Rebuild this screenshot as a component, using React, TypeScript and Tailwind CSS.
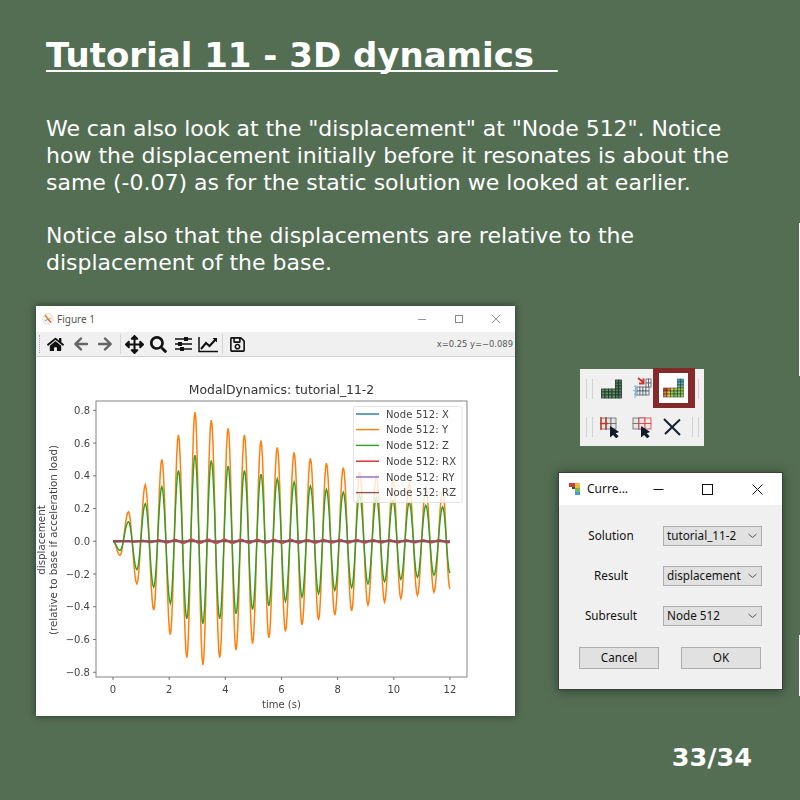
import React from "react";
import { FaHome, FaArrowLeft, FaArrowRight, FaArrowsAlt, FaSearch, FaRegSave } from "react-icons/fa";

const ext: [number, number][] = [
  [0, 0], [0.25, -0.085], [0.55, 0.18], [0.85, -0.26], [1.15, 0.345], [1.45, -0.42], [1.74, 0.5], [2.04, -0.57],
  [2.33, 0.65], [2.63, -0.71], [2.92, 0.79], [3.2, -0.755], [3.5, 0.74], [3.8, -0.71], [4.1, 0.69], [4.38, -0.665],
  [4.68, 0.65], [4.97, -0.625], [5.27, 0.615], [5.55, -0.59], [5.85, 0.573], [6.14, -0.55], [6.45, 0.543], [6.73, -0.51],
  [7.03, 0.507], [7.32, -0.48], [7.6, 0.477], [7.9, -0.45], [8.2, 0.45], [8.5, -0.425], [8.78, 0.424], [9.08, -0.39],
  [9.38, 0.4], [9.67, -0.37], [9.97, 0.375], [10.25, -0.35], [10.55, 0.355], [10.84, -0.33], [11.14, 0.33], [11.43, -0.31],
  [11.74, 0.315], [12, -0.29],
];
const X = (t: number) => 113 + 28.08 * t;
const Y = (v: number) => 541.3 - 163.7 * v;
function curve(scale: number) {
  const pts: string[] = [];
  for (let i = 0; i < ext.length - 1; i++) {
    const [t0, v0] = ext[i];
    const [t1, v1] = ext[i + 1];
    for (let k = 0; k < 10; k++) {
      const f = k / 10;
      const v = v0 + ((v1 - v0) * (1 - Math.cos(Math.PI * f))) / 2;
      pts.push(`${X(t0 + (t1 - t0) * f).toFixed(2)},${Y(v * scale).toFixed(2)}`);
    }
  }
  pts.push(`${X(12)},${Y(-0.29 * scale)}`);
  return pts.join(" ");
}
function small(a: number) {
  const pts: string[] = [];
  for (let t = 0; t <= 12; t += 0.04) {
    const env = Math.min(t / 2.5, 1) * (1 - (t / 12) * 0.4);
    pts.push(`${X(t).toFixed(2)},${Y(-a * env * Math.sin((2 * Math.PI * t) / 0.588)).toFixed(2)}`);
  }
  return pts.join(" ");
}

const dv = { fontFamily: '"DejaVu Sans", sans-serif' };

function Plot() {
  const ticksY = [0.8, 0.6, 0.4, 0.2, 0, -0.2, -0.4, -0.6, -0.8];
  const legend: [string, string, number][] = [
    ["Node 512: X", "#1f77b4", 414],
    ["Node 512: Y", "#ff7f0e", 429.6],
    ["Node 512: Z", "#2ca02c", 445.4],
    ["Node 512: RX", "#d62728", 461.2],
    ["Node 512: RY", "#9467bd", 477],
    ["Node 512: RZ", "#8c564b", 492.6],
  ];
  return (
    <svg viewBox="36 357 479 359" width={479} height={359} className="block blur-[0.3px]" style={dv}>
      <rect x="36" y="357" width="479" height="359" fill="#fff" />
      <text x="281.5" y="394" textAnchor="middle" fontSize="12.4" fill="#333">ModalDynamics: tutorial_11-2</text>
      <polyline points={curve(1)} fill="none" stroke="#ff7f0e" strokeWidth="1.5" />
      <polyline points={curve(0.667)} fill="none" stroke="#2ca02c" strokeWidth="1.4" />
      <polyline points={small(0.015)} fill="none" stroke="#e0484a" strokeWidth="1.5" />
      <line x1={X(0)} x2={X(12)} y1={Y(0)} y2={Y(0)} stroke="#9467bd" strokeWidth="1.5" />
      <polyline points={small(0.002)} fill="none" stroke="#8c5058" strokeWidth="2.4" />
      <rect x="96" y="401" width="371" height="276" fill="none" stroke="#777" strokeWidth="0.9" />
      {ticksY.map((v) => (
        <g key={v}>
          <line x1="93" x2="96" y1={Y(v)} y2={Y(v)} stroke="#555" strokeWidth="0.8" />
          <text x="90" y={Y(v) + 3.6} textAnchor="end" fontSize="10" fill="#444">
            {v < 0 ? "−" + Math.abs(v).toFixed(1) : v.toFixed(1)}
          </text>
        </g>
      ))}
      {[0, 2, 4, 6, 8, 10, 12].map((t) => (
        <g key={t}>
          <line x1={X(t)} x2={X(t)} y1="677" y2="680" stroke="#555" strokeWidth="0.8" />
          <text x={X(t)} y="693" textAnchor="middle" fontSize="10" fill="#444">{t}</text>
        </g>
      ))}
      <text x="281.5" y="708" textAnchor="middle" fontSize="10" fill="#444">time (s)</text>
      <text transform="translate(45 540) rotate(-90)" textAnchor="middle" fontSize="10.3" fill="#444">displacement</text>
      <text transform="translate(57 540) rotate(-90)" textAnchor="middle" fontSize="10.3" fill="#444">(relative to base if acceleration load)</text>
      <rect x="353.5" y="406.5" width="108.5" height="96" rx="1.5" fill="#fff" fillOpacity="0.8" stroke="#ddd" strokeWidth="0.8" />
      {legend.map(([label, c, y]) => (
        <g key={label}>
          <line x1="356" x2="379" y1={y} y2={y} stroke={c} strokeWidth="1.4" />
          <text x="386" y={y + 3.6} fontSize="10" fill="#444" letterSpacing="0.12">{label}</text>
        </g>
      ))}
    </svg>
  );
}

function FigureWindow() {
  return (
    <div className="w-[479px] bg-white shadow-[0_0_7px_rgba(20,35,20,0.75)]">
      <div className="h-[26px] flex items-center">
        <svg width="12" height="12" viewBox="0 0 12 12" className="ml-[6px]">
          <circle cx="6" cy="6" r="5.5" fill="#f2f2f2" stroke="#d8d8d8" strokeWidth="0.6" />
          <path d="M6 6L3 2" stroke="#e8832a" strokeWidth="1.4" />
          <path d="M6 6L9.5 5" stroke="#e0c04a" strokeWidth="1.2" />
          <path d="M6 6L9 9.5" stroke="#d86a3a" strokeWidth="1.4" />
          <path d="M6 6L3 8" stroke="#6a9cc7" strokeWidth="1" />
        </svg>
        <span className="ml-[3px] text-[10px] text-[#555]" style={{ fontFamily: '"Noto Sans", sans-serif' }}>Figure 1</span>
        <div className="ml-auto flex items-center gap-[29px] mr-[15px]">
          <svg width="8" height="8" viewBox="0 0 8 8"><path d="M0 4.5H8" stroke="#999" strokeWidth="1" /></svg>
          <svg width="8" height="8" viewBox="0 0 8 8"><rect x="0.5" y="0.5" width="7" height="7" fill="none" stroke="#888" /></svg>
          <svg width="8" height="8" viewBox="0 0 8 8"><path d="M0 0L8 8M8 0L0 8" stroke="#888" strokeWidth="0.9" /></svg>
        </div>
      </div>
      <div className="h-[25px] bg-[#f0f0f0] border-b border-[#cfcfcf] flex items-center text-[#111]">
        <div className="ml-[3px] h-[18px] w-px border-l border-dotted border-[#aaa]" />
        <FaHome className="ml-[7px] shrink-0" size={17} />
        <FaArrowLeft className="ml-[9px] shrink-0 text-[#666]" size={16} />
        <FaArrowRight className="ml-[8px] shrink-0 text-[#666]" size={16} />
        <div className="ml-[7px] h-[20px] w-px bg-[#d5d5d5]" />
        <FaArrowsAlt className="ml-[4px] shrink-0" size={19} />
        <FaSearch className="ml-[6px] shrink-0" size={17} />
        <svg width="17" height="16" viewBox="0 0 17 16" className="ml-[8px] shrink-0">
          <path d="M0 3H17M0 8H17M0 13H17" stroke="#111" strokeWidth="1.4" />
          <rect x="9" y="1" width="4" height="4" fill="#111" />
          <rect x="3" y="6" width="4" height="4" fill="#111" />
          <rect x="5" y="11" width="4" height="4" fill="#111" />
        </svg>
        <svg width="20" height="17" viewBox="0 0 20 17" className="ml-[6px] shrink-0">
          <path d="M1 1V15.5H20" fill="none" stroke="#111" strokeWidth="1.5" />
          <path d="M3 13L8 7L11.5 10L18 3" fill="none" stroke="#111" strokeWidth="2" />
          <path d="M14.5 2H19V6.5Z" fill="#111" />
        </svg>
        <div className="ml-[4px] h-[20px] w-px bg-[#d5d5d5]" />
        <FaRegSave className="ml-[6px] shrink-0" size={17} />
        <span className="ml-auto mr-[2px] text-[8.4px] text-[#555]" style={dv}>x=0.25 y=−0.089</span>
      </div>
      <Plot />
    </div>
  );
}

function Mesh({ x, y, cols, rows, w, h, fill, stroke = "#26332f", sw = 0.8 }: { x: number; y: number; cols: number; rows: number; w: number; h: number; fill: (c: number, r: number) => string; stroke?: string; sw?: number }) {
  const cells = [];
  for (let r = 0; r < rows; r++)
    for (let c = 0; c < cols; c++)
      cells.push(<rect key={`${r}-${c}`} x={x + c * w} y={y + r * h} width={w} height={h} fill={fill(c, r)} stroke={stroke} strokeWidth={sw} />);
  return <g>{cells}</g>;
}

function LShape({ colour }: { colour: boolean }) {
  const bottom = colour
    ? (c: number, r: number) => [["#d8302c", "#e8792a", "#ecc93a", "#a8cf45"], ["#e8792a", "#ecc93a", "#a8cf45", "#6cc070"], ["#e8792a", "#ecc93a", "#a8cf45", "#6cc070"]][r][c]
    : () => "#5f9a64";
  const right = colour
    ? (_c: number, r: number) => ["#3c9fd0", "#4ab0c0", "#6dbb70", "#93c850"][r]
    : () => "#4f8258";
  return (
    <svg width="21" height="20" viewBox="0 0 21 20" className="shrink-0 blur-[0.25px]">
      <Mesh x={0.5} y={10} cols={4} rows={3} w={3.5} h={3} fill={bottom} sw={colour ? 0.5 : 0.8} />
      <Mesh x={14.5} y={1} cols={2} rows={6} w={3} h={3} fill={(c, r) => right(c, Math.min(3, r))} sw={colour ? 0.5 : 0.8} />
    </svg>
  );
}

function Cursor({ x, y }: { x: number; y: number }) {
  return <path transform={`translate(${x} ${y}) scale(1.35)`} d="M0 0L0 8.5L2.3 6.6L4.6 9.2L6.4 7.6L4.2 5.4L6.8 4.4Z" fill="#0f1c2c" />;
}

function Sep() {
  return <div className="h-[20px] w-px bg-[#d2d2d2] shrink-0" />;
}

function Strip() {
  return (
    <div className="w-[124px] h-[77px] bg-[#f0f0f0] flex flex-col">
      <div className="h-[39px] flex items-center">
        <div className="ml-[6px]"><Sep /></div>
        <div className="ml-[5px]"><Sep /></div>
        <div className="ml-[8px]"><LShape colour={false} /></div>
        <svg width="19" height="23" viewBox="0 0 19 23" className="ml-[11px] shrink-0 blur-[0.25px]">
          <Mesh x={4} y={10} cols={4} rows={2} w={3} h={4} fill={() => "#f4f4f4"} stroke="#55606a" />
          <Mesh x={13} y={2} cols={2} rows={2} w={2.5} h={4} fill={() => "#f4f4f4"} stroke="#55606a" />
          <path d="M1 9L4 11M0 13L4 15M1 17L4 19M3 8L2 21" stroke="#6fb2dc" strokeWidth="1" fill="none" />
          <path d="M5 1L10 5M10.5 1.5V6.5H6" stroke="#cc3333" strokeWidth="2" fill="none" />
        </svg>
        <div className="ml-px w-[42px] h-[40px] -mt-[1px] bg-white border-[#842a2a] border-t-[5px] border-b-[5px] border-l-[6px] border-r-[7px] flex items-center justify-center shrink-0">
          <LShape colour />
        </div>
        <div className="ml-[3px]"><Sep /></div>
      </div>
      <div className="h-[38px] flex items-center">
        <div className="ml-[6px]"><Sep /></div>
        <div className="ml-[5px]"><Sep /></div>
        <svg width="21" height="21" viewBox="0 0 21 21" className="ml-[7px] shrink-0 blur-[0.25px]">
          <Mesh x={1} y={1} cols={3} rows={2} w={5} h={5.5} fill={() => "#e4e4e4"} stroke="#666" />
          <path d="M1 0V13M6 0V13M0 6.5H8" stroke="#c0392b" strokeWidth="1.4" />
          <Cursor x={10} y={9} />
        </svg>
        <svg width="21" height="21" viewBox="0 0 21 21" className="ml-[11px] shrink-0 blur-[0.25px]">
          <Mesh x={1} y={1} cols={2} rows={2} w={6} h={5.5} fill={() => "#e6e6e6"} stroke="#666" />
          <Mesh x={7} y={1} cols={2} rows={2} w={6} h={5.5} fill={() => "#f6e4e4"} stroke="#d04040" />
          <Cursor x={9} y={9} />
        </svg>
        <svg width="19" height="18" viewBox="0 0 19 18" className="ml-[10px] shrink-0">
          <path d="M1 1L17 17M17 1.5L2 16" stroke="#12212f" strokeWidth="2" fill="none" />
        </svg>
        <div className="ml-[10px]"><Sep /></div>
        <div className="ml-[5px]"><Sep /></div>
      </div>
    </div>
  );
}

function Field({ label, value }: { label: string; value: string }) {
  return (
    <div className="flex items-center h-[20px]">
      <span className="w-[104px] text-center text-[11.7px] text-[#111]">{label}</span>
      <div className="w-[99px] h-[20px] bg-[#e1e1e1] border border-[#adadad] flex items-center justify-between pl-[3px] pr-[4px] text-[11.7px] text-[#111]">
        <span>{value}</span>
        <svg width="9" height="6" viewBox="0 0 9 6"><path d="M0.5 1L4.5 4.5L8.5 1" fill="none" stroke="#555" strokeWidth="1" /></svg>
      </div>
    </div>
  );
}

function Dialog() {
  return (
    <div className="w-[225px] h-[218px] bg-[#f0f0f0] border border-[#3b3f3b] shadow-[0_1px_10px_rgba(20,35,20,0.6)] flex flex-col" style={{ fontFamily: '"Noto Sans", sans-serif' }}>
      <div className="h-[32px] bg-white flex items-center shrink-0">
        <svg width="13" height="14" viewBox="0 0 13 14" className="ml-[9px] shrink-0">
          <rect x="1" y="1" width="7" height="4" fill="#c9403a" />
          <rect x="7" y="1" width="5" height="5" fill="#e0c040" />
          <rect x="7" y="6" width="5" height="4" fill="#7cb850" />
          <rect x="7" y="10" width="5" height="3" fill="#3f9fc8" />
          <rect x="4" y="5" width="3" height="2" fill="#2f4f4f" />
        </svg>
        <span className="ml-[6px] text-[12px] text-[#111]">Curre...</span>
        <svg width="11" height="11" viewBox="0 0 11 11" className="ml-[25px] shrink-0"><path d="M0.5 5.5H10.5" stroke="#111" strokeWidth="1" /></svg>
        <svg width="11" height="11" viewBox="0 0 11 11" className="ml-[38px] shrink-0"><rect x="0.5" y="0.5" width="10" height="10" fill="none" stroke="#111" /></svg>
        <svg width="11" height="11" viewBox="0 0 11 11" className="ml-[39px] shrink-0"><path d="M0.5 0.5L10.5 10.5M10.5 0.5L0.5 10.5" stroke="#111" strokeWidth="1" /></svg>
      </div>
      <div className="mt-[21px] flex flex-col gap-[20px]">
        <Field label="Solution" value="tutorial_11-2" />
        <Field label="Result" value="displacement" />
        <Field label="Subresult" value="Node 512" />
      </div>
      <div className="mt-[21px] ml-[20px] flex gap-[22px]">
        <div className="w-[80px] h-[22px] bg-[#e1e1e1] border border-[#adadad] flex items-center justify-center text-[11.7px] text-[#111]">Cancel</div>
        <div className="w-[80px] h-[22px] bg-[#e1e1e1] border border-[#adadad] flex items-center justify-center text-[11.7px] text-[#111]">OK</div>
      </div>
    </div>
  );
}

export default function App() {
  return (
    <div className="relative w-[800px] h-[800px] overflow-hidden bg-[#546e54] text-white" style={dv}>
      <div className="pl-[46px] pt-[35px]">
        <h1 className="text-[34px] leading-[40px] font-bold underline decoration-[2px] underline-offset-[3px] [text-decoration-skip-ink:none] whitespace-pre">Tutorial 11 - 3D dynamics{"\u00a0\u00a0"}</h1>
        <p className="mt-[40px] text-[22px] leading-[27px] whitespace-pre-line">
          <span className="tracking-[-0.07px]">{`We can also look at the "displacement" at "Node 512". Notice`}</span>
          {`
how the displacement initially before it resonates is about the
same (-0.07) as for the static solution we looked at earlier.`}
        </p>
        <p className="mt-[26px] text-[22px] leading-[27px] whitespace-pre-line">{`Notice also that the displacements are relative to the
displacement of the base.`}</p>
      </div>
      <div className="flex pl-[36px] mt-[30px]">
        <FigureWindow />
        <div className="ml-[65px] pt-[63px]">
          <Strip />
          <div className="-ml-[22px] mt-[26px]"><Dialog /></div>
        </div>
      </div>
      <div className="pr-[48px] mt-[26px] text-right text-[25.5px] font-bold leading-[30px]">33/34</div>
      <div className="absolute right-0 top-[223px] w-px h-[153px] bg-white" />
      <div className="absolute right-0 top-[635px] w-px h-[61px] bg-white" />
    </div>
  );
}
